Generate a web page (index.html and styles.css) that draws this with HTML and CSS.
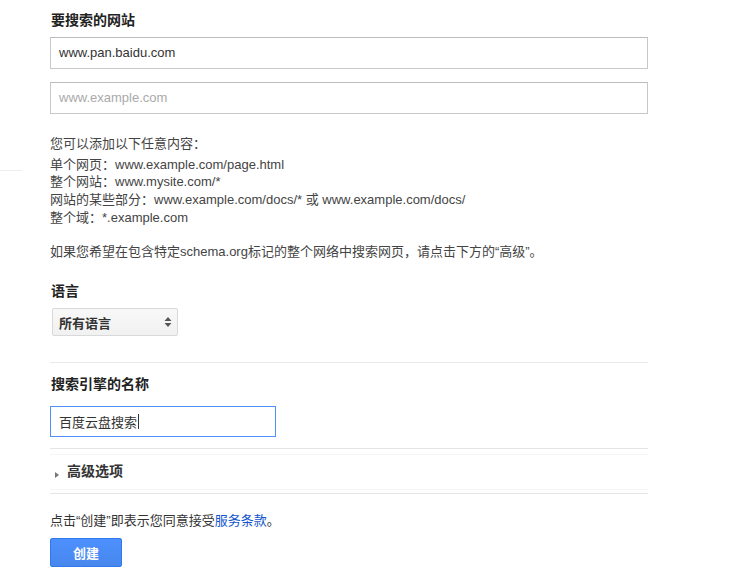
FILE: index.html
```html
<!DOCTYPE html>
<html lang="zh-CN">
<head>
<meta charset="utf-8">
<title>创建自定义搜索引擎</title>
<link rel="stylesheet" href="styles.css">
</head>
<body>
<div class="side-line"></div>
<form class="form">
  <h3 class="label first">要搜索的网站</h3>
  <div class="field">www.pan.baidu.com</div>
  <div class="field placeholder">www.example.com</div>
  <div class="help">
    <p class="intro">您可以添加以下任意内容：</p>
    <p>单个网页：www.example.com/page.html<br>整个网站：www.mysite.com/*<br>网站的某些部分：www.example.com/docs/* 或 www.example.com/docs/<br>整个域：*.example.com</p>
  </div>
  <p class="note">如果您希望在包含特定schema.org标记的整个网络中搜索网页，请点击下方的“高级”。</p>
  <h3 class="label lang">语言</h3>
  <div class="select"><span>所有语言</span>
    <svg width="8" height="12" viewBox="0 0 8 12"><path d="M4 1 L7.5 5 H0.5 Z M4 11 L7.5 7 H0.5 Z" fill="#555"/></svg>
  </div>
  <hr class="rule">
  <h3 class="label">搜索引擎的名称</h3>
  <div class="field name">百度云盘搜索<span class="caret"></span></div>
  <hr class="rule double">
  <div class="advanced"><span class="tri"></span>高级选项</div>
  <hr class="rule double">
  <p class="terms">点击“创建”即表示您同意接受<a href="#">服务条款</a>。</p>
  <button type="button" class="btn">创建</button>
</form>
</body>
</html>
```
FILE: styles.css
```css
html, body { margin: 0; padding: 0; background: #fff; }
body {
  font-family: "Liberation Sans", Arial, "Noto Sans CJK SC", sans-serif;
  color: #333;
  font-size: 13px;
  position: relative;
}
.side-line {
  position: absolute; left: 0; top: 170px; width: 22px; height: 1px;
  background: #eee;
}
.form {
  width: 598px;
  margin-left: 50px;
  padding-top: 11.5px;
}
.label {
  font-size: 14px;
  font-weight: bold;
  color: #222;
  margin: 0;
  line-height: 17px;
  padding-left: 1px;
}
.field {
  box-sizing: border-box;
  height: 32px;
  border: 1px solid #c8c8c8;
  border-top-color: #bbb;
  line-height: 30px;
  padding: 0 8px;
  font-size: 13px;
  color: #333;
  margin-top: 8.5px;
}
.field + .field { margin-top: 13px; }
.placeholder { color: #aaa; }
.help { margin-top: 21px; }
.help p { margin: 0; line-height: 17.7px; color: #444; }
.help .intro { line-height: 17px; margin-bottom: 3.5px; }
.note { margin: 17px 0 0; line-height: 18px; color: #444; }
.lang { margin-top: 21.5px; }
.select {
  box-sizing: border-box;
  width: 126px;
  height: 28px;
  margin: 8.5px 0 0 2px;
  border: 1px solid #d9d9d9;
  border-radius: 2px;
  background: linear-gradient(#f8f8f8, #f1f1f1);
  display: flex;
  align-items: center;
  justify-content: space-between;
  padding: 0 5px 0 6px;
  font-size: 13px;
  font-weight: bold;
  color: #333;
}
.rule {
  border: 0;
  height: 1px;
  background: #eaeaea;
  margin: 26px 0 12.5px;
}
.name {
  width: 226px;
  border-color: #4d90fe;
  margin-top: 13.5px;
  height: 31px;
  display: flex;
  align-items: center;
  line-height: normal;
}
.caret { display: inline-block; width: 1px; height: 15px; background: #333; margin-left: 1px; }
.rule.double {
  margin: 11px 0 0;
  height: 1px;
  background: #e5e5e5;
  box-shadow: 0 6px 0 #f6f6f6;
}
.advanced {
  font-size: 14px;
  font-weight: bold;
  color: #333;
  line-height: 17px;
  padding: 14px 0 13px 5px;
  display: flex;
  align-items: center;
}
.tri {
  width: 0; height: 0;
  border-left: 4px solid #777;
  border-top: 3px solid transparent;
  border-bottom: 3px solid transparent;
  margin: 6px 8px 0 0;
}
.advanced + .rule.double { margin-top: 0; box-shadow: 0 -4px 0 #f6f6f6; }
.terms { margin: 18px 0 0; line-height: 17px; color: #333; }
.terms a { color: #15c; text-decoration: none; }
.btn {
  display: block;
  margin-top: 8.5px;
  width: 72px;
  height: 29px;
  border: 1px solid #3079ed;
  border-radius: 2px;
  background: linear-gradient(#4d90fe, #4787ed);
  color: #fff;
  font-family: "Noto Sans CJK SC", sans-serif;
  font-weight: bold;
  font-size: 13px;
  padding: 0;
}
```
